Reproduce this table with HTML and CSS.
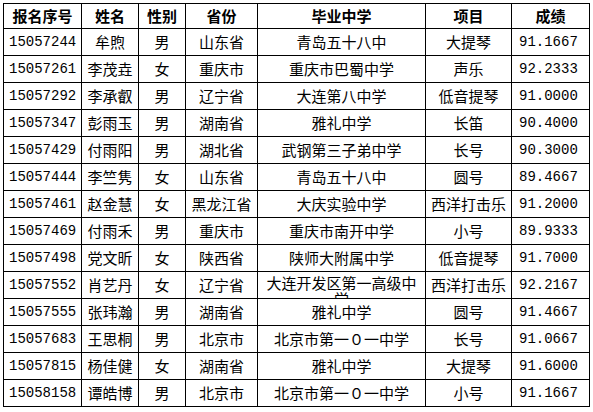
FILE: index.html
```html
<!DOCTYPE html>
<html lang="zh-CN">
<head>
<meta charset="utf-8">
<title>成绩表</title>
<link rel="stylesheet" href="styles.css">
</head>
<body>
<table class="grid">
  <colgroup>
    <col class="c-id"><col class="c-name"><col class="c-sex"><col class="c-prov"><col class="c-school"><col class="c-item"><col class="c-score">
  </colgroup>
  <thead>
    <tr class="head"><th>报名序号</th><th>姓名</th><th>性别</th><th>省份</th><th>毕业中学</th><th>项目</th><th>成绩</th></tr>
  </thead>
  <tbody>
    <tr><td class="num">15057244</td><td>牟煦</td><td>男</td><td>山东省</td><td>青岛五十八中</td><td>大提琴</td><td class="num score">91.1667</td></tr>
    <tr><td class="num">15057261</td><td>李茂垚</td><td>女</td><td>重庆市</td><td>重庆市巴蜀中学</td><td>声乐</td><td class="num score">92.2333</td></tr>
    <tr><td class="num">15057292</td><td>李承叡</td><td>男</td><td>辽宁省</td><td>大连第八中学</td><td>低音提琴</td><td class="num score">91.0000</td></tr>
    <tr><td class="num">15057347</td><td>彭雨玉</td><td>男</td><td>湖南省</td><td>雅礼中学</td><td>长笛</td><td class="num score">90.4000</td></tr>
    <tr><td class="num">15057429</td><td>付雨阳</td><td>男</td><td>湖北省</td><td>武钢第三子弟中学</td><td>长号</td><td class="num score">90.3000</td></tr>
    <tr><td class="num">15057444</td><td>李竺隽</td><td>女</td><td>山东省</td><td>青岛五十八中</td><td>圆号</td><td class="num score">89.4667</td></tr>
    <tr><td class="num">15057461</td><td>赵金慧</td><td>女</td><td>黑龙江省</td><td>大庆实验中学</td><td>西洋打击乐</td><td class="num score">91.2000</td></tr>
    <tr><td class="num">15057469</td><td>付雨禾</td><td>男</td><td>重庆市</td><td>重庆市南开中学</td><td>小号</td><td class="num score">89.9333</td></tr>
    <tr><td class="num">15057498</td><td>党文昕</td><td>女</td><td>陕西省</td><td>陕师大附属中学</td><td>低音提琴</td><td class="num score">91.7000</td></tr>
    <tr><td class="num">15057552</td><td>肖艺丹</td><td>女</td><td>辽宁省</td><td class="wrap"><div class="clip">大连开发区第一高级中学</div></td><td>西洋打击乐</td><td class="num score">92.2167</td></tr>
    <tr><td class="num">15057555</td><td>张玮瀚</td><td>男</td><td>湖南省</td><td>雅礼中学</td><td>圆号</td><td class="num score">91.4667</td></tr>
    <tr><td class="num">15057683</td><td>王思桐</td><td>男</td><td>北京市</td><td>北京市第一０一中学</td><td>长号</td><td class="num score">91.0667</td></tr>
    <tr><td class="num">15057815</td><td>杨佳健</td><td>女</td><td>湖南省</td><td>雅礼中学</td><td>大提琴</td><td class="num score">91.6000</td></tr>
    <tr><td class="num">15058158</td><td>谭皓博</td><td>男</td><td>北京市</td><td>北京市第一０一中学</td><td>小号</td><td class="num score">91.1667</td></tr>
  </tbody>
</table>
</body>
</html>
```
FILE: styles.css
```css
html, body {
  margin: 0;
  background: #ffffff;
}
body {
  padding: 3px 0 0 3px;
  font-family: "Noto Sans CJK SC", "Noto Sans", sans-serif;
  color: #000000;
}
.grid {
  border-collapse: collapse;
  table-layout: fixed;
  width: 587px;
}
.c-id { width: 78px; }
.c-name { width: 57px; }
.c-sex { width: 47px; }
.c-prov { width: 72px; }
.c-school { width: 168px; }
.c-item { width: 86px; }
.c-score { width: 78px; }

.grid th, .grid td {
  border: 1px solid #000000;
  padding: 0;
  text-align: center;
  vertical-align: middle;
  white-space: nowrap;
  overflow: hidden;
}
.grid th {
  height: 24px;
  font-size: 15px;
  font-weight: 700;
  line-height: 24px;
}
.grid td {
  height: 26px;
  font-size: 15px;
  font-weight: 400;
  line-height: 26px;
}
.grid td.num {
  text-align: left;
  padding-left: 5px;
  font-family: "Liberation Mono", "DejaVu Sans Mono", monospace;
  font-size: 14px;
}
.grid td.score {
  padding-left: 7px;
}
.grid td.wrap {
  white-space: normal;
  vertical-align: top;
}
.clip {
  height: 26px;
  overflow: hidden;
  padding: 3px 4px 0;
  box-sizing: border-box;
  line-height: 16px;
  word-break: break-all;
}
```
